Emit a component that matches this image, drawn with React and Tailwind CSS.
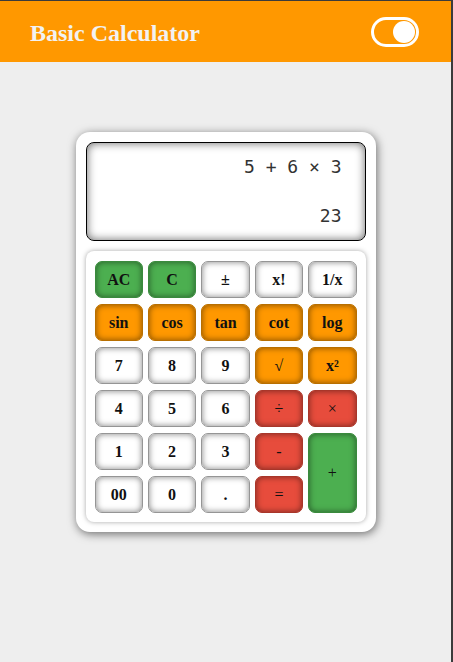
import React from "react";

const serif = { fontFamily: '"Liberation Serif", "Times New Roman", serif' };

const styles = {
  white: "bg-white border-[#959595]",
  green: "bg-[#4caf50] border-[#3a8a3d]",
  orange: "bg-[#ff9800] border-[#b86f00]",
  red: "bg-[#e74c3c] border-[#a8362a]",
};

const keys = [
  ["AC", "green"], ["C", "green"], ["±", "white"], ["x!", "white"], ["1/x", "white"],
  ["sin", "orange"], ["cos", "orange"], ["tan", "orange"], ["cot", "orange"], ["log", "orange"],
  ["7", "white"], ["8", "white"], ["9", "white"], ["√", "orange", true], ["x²", "orange"],
  ["4", "white"], ["5", "white"], ["6", "white"], ["÷", "red", true], ["×", "red", true],
  ["1", "white"], ["2", "white"], ["3", "white"], ["-", "red", true], ["+", "green", true, true],
  ["00", "white"], ["0", "white"], [".", "white"], ["=", "red", true],
];

function Key({ label, kind, light, tall }) {
  return (
    <button
      className={`${styles[kind]} ${tall ? "row-span-2" : "h-[37px]"} border rounded-[7px] shadow-[inset_0_0_6px_rgba(0,0,0,0.5)] flex items-center justify-center text-[16px] text-[#111] ${light ? "font-normal" : "font-bold"}`}
      style={serif}
    >
      {label}
    </button>
  );
}

export default function App() {
  return (
    <div className="w-[453px] h-[662px] bg-[#eeeeee] border-t border-r-2 border-[#3b3b3b] flex flex-col">
      <header className="h-[61px] bg-[#ff9800] flex items-center justify-between pl-[30px] pr-[32px] shrink-0">
        <h1 className="text-[24px] font-bold text-[#f2f2f2] pt-[2px]" style={serif}>
          Basic Calculator
        </h1>
        <div className="w-[48px] h-[30px] rounded-full border-[3px] border-white flex items-center justify-end pr-[1px]">
          <div className="w-[22px] h-[22px] rounded-full bg-white" />
        </div>
      </header>

      <div className="flex justify-center pt-[70px]">
        <div className="w-[300px] bg-white rounded-[14px] p-[10px] shadow-[1px_2px_10px_rgba(0,0,0,0.55)] flex flex-col gap-[10px]">
          <div
            className="h-[99px] border border-black rounded-[8px] shadow-[inset_0_0_10px_rgba(0,0,0,0.6)] bg-white flex flex-col items-end pr-[23px] pt-[12px] gap-[25px] text-[18px] leading-[24px] text-[#333]"
            style={{ fontFamily: '"DejaVu Sans Mono", monospace' }}
          >
            <div>5 + 6 × 3</div>
            <div>23</div>
          </div>
          <div className="rounded-[8px] bg-white shadow-[0_0_5px_rgba(0,0,0,0.35)] pt-[10px] pb-[9px] pl-[9px] pr-[9px] grid grid-cols-5 gap-x-[5px] gap-y-[6px]">
            {keys.map(([label, kind, light, tall]) => (
              <Key key={label} label={label} kind={kind} light={light} tall={tall} />
            ))}
          </div>
        </div>
      </div>
    </div>
  );
}
